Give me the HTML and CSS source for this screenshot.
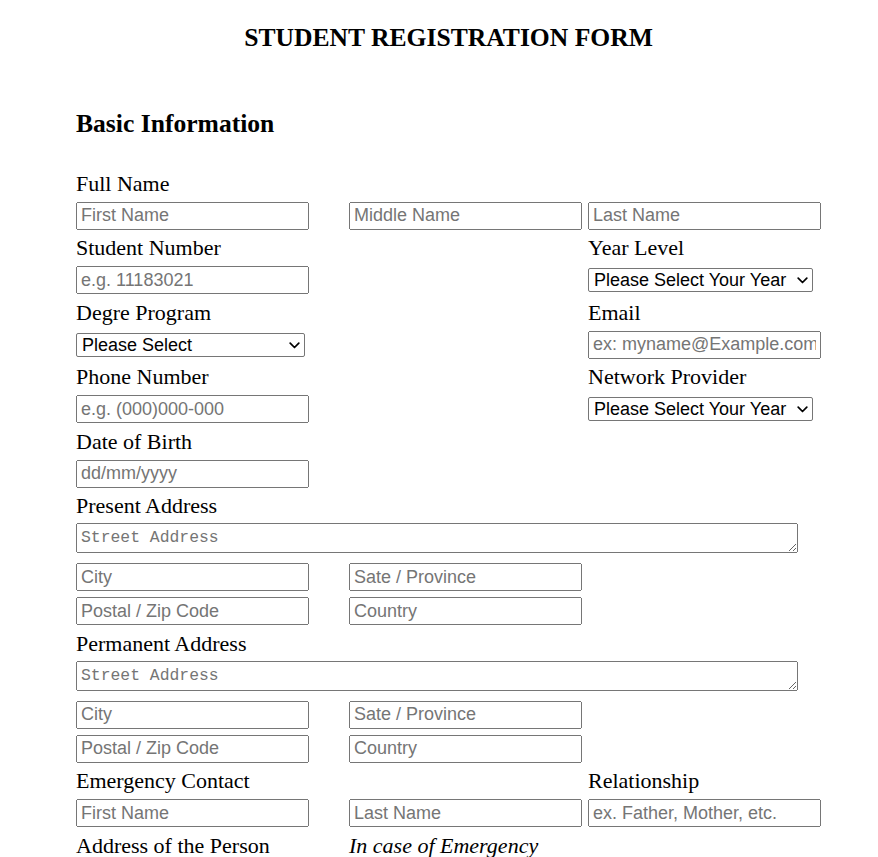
FILE: index.html
```html
<!DOCTYPE html>
<html lang="en">
<head>
<meta charset="utf-8">
<title>Student Registration Form</title>
<link rel="stylesheet" href="styles.css">
</head>
<body>
<div class="page">
  <h1 class="title">STUDENT REGISTRATION FORM</h1>
  <h2 class="section">Basic Information</h2>
  <form class="form">
    <div class="row lbl-row"><label class="lbl">Full Name</label></div>
    <div class="row inp-row">
      <input class="field" type="text" placeholder="First Name">
      <input class="field" type="text" placeholder="Middle Name">
      <input class="field" type="text" placeholder="Last Name">
    </div>

    <div class="row lbl-row"><label class="lbl">Student Number</label><span></span><label class="lbl">Year Level</label></div>
    <div class="row inp-row">
      <input class="field" type="text" placeholder="e.g. 11183021">
      <span></span>
      <span class="select-wrap">
        <select class="pick pick-year"><option>Please Select Your Year</option></select>
        <svg class="chev" width="11" height="7" viewBox="0 0 11 7"><path d="M1.2 1.2 L5.5 5.5 L9.8 1.2" fill="none" stroke="#000" stroke-width="1.7" stroke-linecap="round" stroke-linejoin="round"/></svg>
      </span>
    </div>

    <div class="row lbl-row"><label class="lbl">Degre Program</label><span></span><label class="lbl">Email</label></div>
    <div class="row inp-row">
      <span class="select-wrap">
        <select class="pick pick-degree"><option>Please Select</option></select>
        <svg class="chev" width="11" height="7" viewBox="0 0 11 7"><path d="M1.2 1.2 L5.5 5.5 L9.8 1.2" fill="none" stroke="#000" stroke-width="1.7" stroke-linecap="round" stroke-linejoin="round"/></svg>
      </span>
      <span></span>
      <input class="field" type="text" placeholder="ex: myname@Example.com">
    </div>

    <div class="row lbl-row"><label class="lbl">Phone Number</label><span></span><label class="lbl">Network Provider</label></div>
    <div class="row inp-row">
      <input class="field" type="text" placeholder="e.g. (000)000-000">
      <span></span>
      <span class="select-wrap">
        <select class="pick pick-year"><option>Please Select Your Year</option></select>
        <svg class="chev" width="11" height="7" viewBox="0 0 11 7"><path d="M1.2 1.2 L5.5 5.5 L9.8 1.2" fill="none" stroke="#000" stroke-width="1.7" stroke-linecap="round" stroke-linejoin="round"/></svg>
      </span>
    </div>

    <div class="row lbl-row"><label class="lbl">Date of Birth</label></div>
    <div class="row inp-row">
      <input class="field" type="text" placeholder="dd/mm/yyyy">
    </div>

    <div class="row lbl-row"><label class="lbl">Present Address</label></div>
    <div class="row ta-row"><textarea class="area" placeholder="Street Address"></textarea></div>
    <div class="row addr-row">
      <input class="field" type="text" placeholder="City">
      <input class="field" type="text" placeholder="Sate / Province">
    </div>
    <div class="row addr-row addr-last">
      <input class="field" type="text" placeholder="Postal / Zip Code">
      <input class="field" type="text" placeholder="Country">
    </div>

    <div class="row lbl-row"><label class="lbl">Permanent Address</label></div>
    <div class="row ta-row"><textarea class="area" placeholder="Street Address"></textarea></div>
    <div class="row addr-row">
      <input class="field" type="text" placeholder="City">
      <input class="field" type="text" placeholder="Sate / Province">
    </div>
    <div class="row addr-row addr-last">
      <input class="field" type="text" placeholder="Postal / Zip Code">
      <input class="field" type="text" placeholder="Country">
    </div>

    <div class="row lbl-row"><label class="lbl">Emergency Contact</label><span></span><label class="lbl">Relationship</label></div>
    <div class="row inp-row">
      <input class="field" type="text" placeholder="First Name">
      <input class="field" type="text" placeholder="Last Name">
      <input class="field" type="text" placeholder="ex. Father, Mother, etc.">
    </div>

    <div class="row lbl-row"><label class="lbl">Address of the Person</label><em class="lbl note">In case of Emergency</em></div>
  </form>
</div>
</body>
</html>
```
FILE: styles.css
```css
html, body {
  margin: 0;
  padding: 0;
  background: #ffffff;
}

body {
  font-family: "Liberation Serif", "Times New Roman", serif;
  color: #000000;
}

.page {
  width: 745px;
  padding: 23px 0 0 76px;
}

.title {
  margin: 0;
  font-size: 25.6px;
  line-height: 30px;
  font-weight: bold;
  text-align: center;
}

.section {
  margin: 56px 0 0;
  font-size: 25.6px;
  line-height: 30px;
  font-weight: bold;
}

.form {
  margin-top: 28px;
}

.row {
  display: grid;
  grid-template-columns: 273px 239px 233px;
  align-items: center;
}

.lbl-row { height: 32.5px; }
.inp-row { height: 32px; }

.addr-row {
  height: 34px;
  align-items: start;
}
.addr-row .field { margin-top: 3px; }
.addr-last { height: 33px; }

.ta-row {
  height: 38px;
  align-items: start;
}

.lbl {
  font-size: 22px;
  line-height: 25px;
  white-space: nowrap;
}

.note {
  font-style: italic;
}

.field {
  box-sizing: border-box;
  width: 233px;
  height: 28px;
  margin: 0;
  padding: 1px 3px;
  font-family: "Liberation Sans", Arial, sans-serif;
  font-size: 18px;
  color: #000000;
}

.field::placeholder,
.area::placeholder {
  color: #757575;
}

.select-wrap {
  position: relative;
  display: inline-block;
  width: max-content;
  height: 24px;
}

.pick {
  -webkit-appearance: none;
  appearance: none;
  box-sizing: border-box;
  display: block;
  height: 24px;
  margin: 0;
  padding: 0 22px 0 5px;
  border: 1px solid #767676;
  border-radius: 2px;
  font-family: "Liberation Sans", Arial, sans-serif;
  font-size: 18px;
  line-height: 22px;
  color: #000000;
  background: #ffffff;
}

.pick-year { width: 225px; }
.pick-degree { width: 229px; }

.chev {
  position: absolute;
  right: 5px;
  top: 9px;
  pointer-events: none;
}

.area {
  grid-column: 1 / 4;
  box-sizing: border-box;
  width: 722px;
  height: 30px;
  margin: 1px 0 0;
  padding: 4px 4px;
  font-family: "Liberation Mono", "DejaVu Sans Mono", monospace;
  font-size: 16.4px;
  line-height: 19px;
}
```
